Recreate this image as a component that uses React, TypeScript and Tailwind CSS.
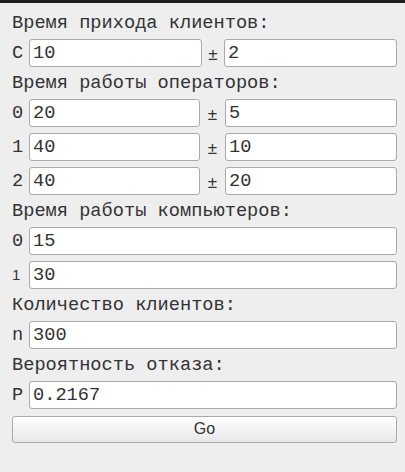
const mono = { fontFamily: '"Liberation Mono", "Courier New", monospace' };

const Field = ({ value, className }: { value: string; className: string }) => (
    <input
        defaultValue={value}
        className={
            "h-[28px] min-w-0 rounded-[3px] border border-[#aaa] bg-white px-[3px] text-[#333] outline-none " + className
        }
    />
);

const Label = ({ text }: { text: string }) => (
    <div className="flex h-[26px] items-center text-[#333]">{text}</div>
);

const Pair = ({ name, a, b, wide }: { name: string; a: string; b: string; wide?: boolean }) => (
    <div className="flex h-[34px] items-center">
        <span className="w-[17px] shrink-0">{name}</span>
        <Field value={a} className={wide ? "w-[173px] shrink-0" : "w-[171px] shrink-0"} />
        <span
            className={
                wide
                    ? "flex w-[22px] shrink-0 justify-center pt-[3px] font-['Liberation_Sans'] text-[17px]"
                    : "flex w-[25px] shrink-0 justify-center pt-[3px] font-['Liberation_Sans'] text-[17px]"
            }
        >
            ±
        </span>
        <Field value={b} className="w-0 flex-1" />
    </div>
);

const Single = ({ name, value, sans }: { name: string; value: string; sans?: boolean }) => (
    <div className="flex h-[34px] items-center">
        {sans ? (
            <span className="w-[17px] shrink-0 self-end pb-[6px] font-['Liberation_Sans'] text-[15px]">{name}</span>
        ) : (
            <span className="w-[17px] shrink-0">{name}</span>
        )}
        <Field value={value} className="w-0 flex-1" />
    </div>
);

export default function App() {
    return (
        <div className="min-h-[472px] bg-[#eeeeee] text-[18.67px] text-[#333]" style={mono}>
            <div className="h-[3px] bg-[#1e1e1e]" />
            <div className="pl-[12px] pr-[8px] pt-[7px]">
                <Label text="Время прихода клиентов:" />
                <Pair name="C" a="10" b="2" wide />
                <Label text="Время работы операторов:" />
                <Pair name="0" a="20" b="5" />
                <Pair name="1" a="40" b="10" />
                <Pair name="2" a="40" b="20" />
                <Label text="Время работы компьютеров:" />
                <Single name="0" value="15" />
                <Single name="1" value="30" sans />
                <Label text="Количество клиентов:" />
                <Single name="n" value="300" />
                <Label text="Вероятность отказа:" />
                <Single name="P" value="0.2167" />
                <div className="flex h-[34px] items-center">
                    <button className="h-[27px] w-full rounded-[3px] border border-[#aaa] bg-gradient-to-b from-white to-[#e8e8e8] font-['Liberation_Sans'] text-[16px] text-[#333]">
                        Go
                    </button>
                </div>
            </div>
        </div>
    );
}
